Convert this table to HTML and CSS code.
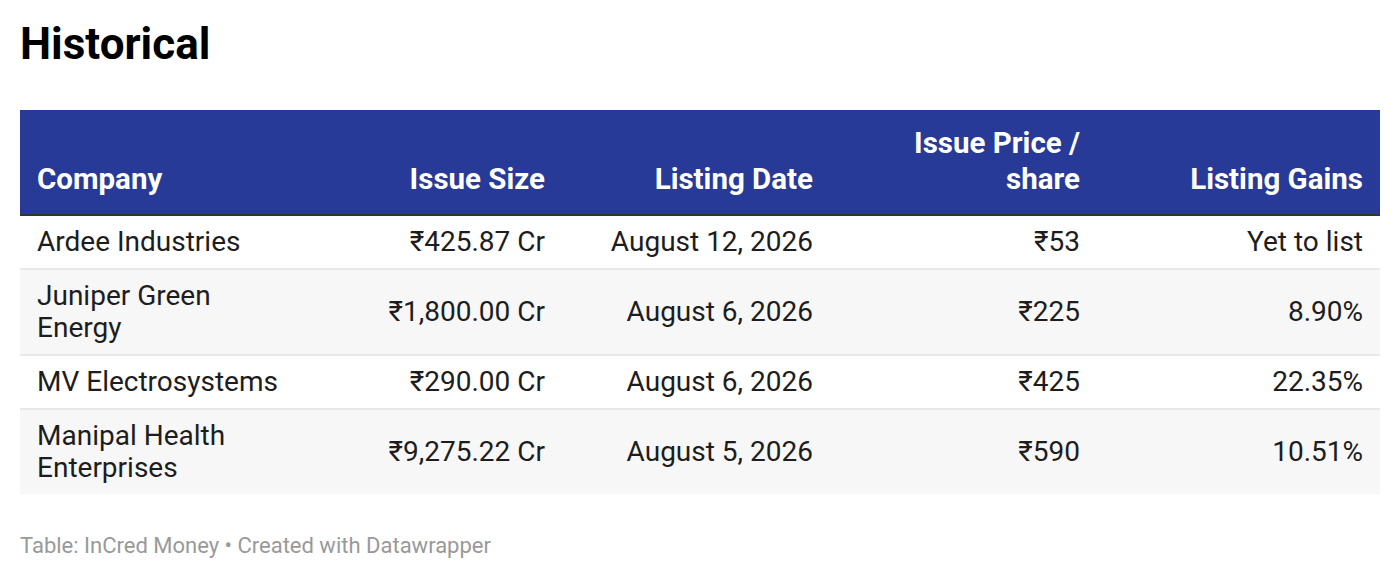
FILE: index.html
```html
<!DOCTYPE html>
<html>
<head>
<meta charset="utf-8">
<link rel="stylesheet" href="styles.css">
</head>
<body>
<div class="chart">
  <h1 class="title">Historical</h1>
  <table class="tbl">
    <colgroup>
      <col class="c1"><col class="c2"><col class="c3"><col class="c4"><col class="c5">
    </colgroup>
    <thead>
      <tr>
        <th class="left">Company</th>
        <th>Issue Size</th>
        <th>Listing Date</th>
        <th>Issue Price /<br>share</th>
        <th>Listing Gains</th>
      </tr>
    </thead>
    <tbody>
      <tr>
        <td class="left">Ardee Industries</td>
        <td>₹425.87 Cr</td>
        <td>August 12, 2026</td>
        <td>₹53</td>
        <td>Yet to list</td>
      </tr>
      <tr class="alt">
        <td class="left">Juniper Green<br>Energy</td>
        <td>₹1,800.00 Cr</td>
        <td>August 6, 2026</td>
        <td>₹225</td>
        <td>8.90%</td>
      </tr>
      <tr>
        <td class="left">MV Electrosystems</td>
        <td>₹290.00 Cr</td>
        <td>August 6, 2026</td>
        <td>₹425</td>
        <td>22.35%</td>
      </tr>
      <tr class="alt last">
        <td class="left">Manipal Health<br>Enterprises</td>
        <td>₹9,275.22 Cr</td>
        <td>August 5, 2026</td>
        <td>₹590</td>
        <td>10.51%</td>
      </tr>
    </tbody>
  </table>
  <div class="footer">Table: InCred Money • Created with Datawrapper</div>
</div>
</body>
</html>
```

FILE: styles.css
```css
html, body {
  margin: 0;
  padding: 0;
  background: #ffffff;
}
.chart {
  padding: 20px 20px 0 20px;
  font-family: Roboto, "Liberation Sans", sans-serif;
  color: #1d1d1d;
}
.title {
  margin: 0;
  font-size: 44px;
  line-height: 48px;
  font-weight: 700;
  color: #000;
}
.tbl {
  margin-top: 42px;
  width: 1360px;
  border-collapse: collapse;
  table-layout: fixed;
}
.c1 { width: 275px; }
.c2 { width: 267px; }
.c3 { width: 268px; }
.c4 { width: 267px; }
.c5 { width: 283px; }
.tbl th {
  background: #283a97;
  color: #fff;
  font-size: 29.5px;
  font-weight: 700;
  line-height: 36px;
  text-align: right;
  vertical-align: bottom;
  padding: 15px 17px 17px 17px;
  border-bottom: 2px solid #333;
}
.tbl td {
  font-size: 28px;
  line-height: 32px;
  text-align: right;
  vertical-align: middle;
  padding: 10px 17px;
  border-bottom: 2px solid #e8e8e8;
}
.tbl tr.last td { border-bottom: none; }
.tbl tr.alt td { background: #f7f7f7; }
.tbl .left { text-align: left; }
.footer {
  margin-top: 40px;
  font-size: 22px;
  line-height: 24px;
  color: #999;
}
```
